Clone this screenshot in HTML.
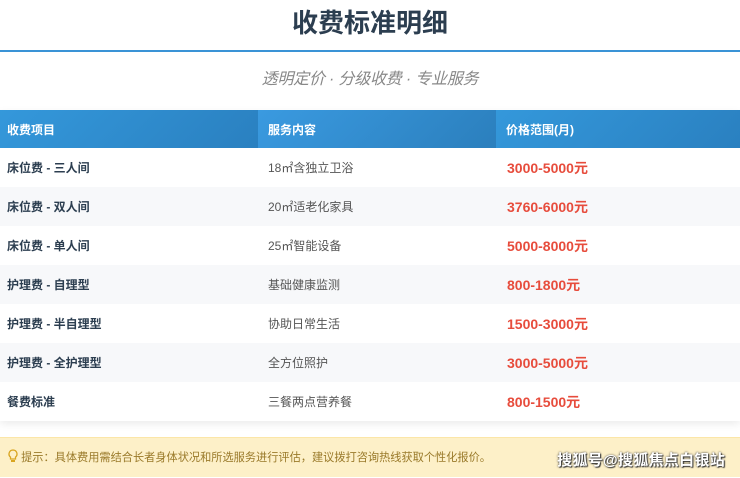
<!DOCTYPE html>
<html><head><meta charset="utf-8"><style>
body{margin:0;width:740px;height:477px;background:#fff;font-family:"Liberation Sans","Noto Sans CJK SC",sans-serif;overflow:hidden;position:relative}
h1{margin:0;position:absolute;top:5px;left:0;width:740px;text-align:center;font-size:26px;font-weight:bold;color:#2c3e50;line-height:36px}
.line{position:absolute;top:50px;left:0;width:740px;height:2px;background:#3a93d6}
.sub{position:absolute;top:68px;width:740px;text-align:center;font-size:16px;font-style:italic;color:#888;line-height:24px;letter-spacing:-0.2px}
table{position:absolute;top:110px;left:0;width:740px;border-collapse:collapse;box-shadow:0 3px 8px rgba(0,0,0,0.08)}
th{height:38px;text-align:left;padding:0 0 0 7px;font-size:12px;color:#fff;font-weight:bold;background:linear-gradient(135deg,#3498db,#2a80c0)}
th:nth-child(2){background:linear-gradient(135deg,#3a9ae0,#2b7fbd);padding-left:10px}
th:nth-child(3){padding-left:10px}
td{height:39px;padding:0 0 0 7px;font-size:12px;color:#333}
td:first-child{font-weight:bold;color:#2c3e50}
td:nth-child(2){color:#555;padding-left:10px}
td:nth-child(3){color:#e74c3c;font-weight:bold;font-size:14px;padding-left:11px}
tr:nth-child(odd) td{background:#f7f8fa}
.c1{width:251px}.c2{width:228px}
.note{position:absolute;top:437px;left:0;width:740px;height:40px;background:#fdf0c8;border-top:1px solid #fbe6a8;font-size:11.2px;color:#9a7a2a;line-height:40px;padding-left:8px;box-sizing:border-box}
.wm{position:absolute;right:15px;top:449px;font-size:15px;color:#fff;font-weight:bold;text-shadow:0 0 2px #333,1px 1px 1px #333;letter-spacing:0.3px}
</style></head><body>
<h1>收费标准明细</h1>
<div class="line"></div>
<div class="sub">透明定价 · 分级收费 · 专业服务</div>
<table>
<tr><th class="c1">收费项目</th><th class="c2">服务内容</th><th>价格范围(月)</th></tr>
<tr><td>床位费 - 三人间</td><td>18㎡含独立卫浴</td><td>3000-5000元</td></tr>
<tr><td>床位费 - 双人间</td><td>20㎡适老化家具</td><td>3760-6000元</td></tr>
<tr><td>床位费 - 单人间</td><td>25㎡智能设备</td><td>5000-8000元</td></tr>
<tr><td>护理费 - 自理型</td><td>基础健康监测</td><td>800-1800元</td></tr>
<tr><td>护理费 - 半自理型</td><td>协助日常生活</td><td>1500-3000元</td></tr>
<tr><td>护理费 - 全护理型</td><td>全方位照护</td><td>3000-5000元</td></tr>
<tr><td>餐费标准</td><td>三餐两点营养餐</td><td>800-1500元</td></tr>
</table>
<div class="note"><svg width="10" height="14" viewBox="0 0 10 14" style="vertical-align:-2px"><path d="M5 1a4 4 0 0 0-2.5 7.1V10h5V8.1A4 4 0 0 0 5 1z" fill="none" stroke="#d9a520" stroke-width="1.3"/><rect x="3" y="11" width="4" height="2" fill="#d9a520"/></svg> 提示：具体费用需结合长者身体状况和所选服务进行评估，建议拨打咨询热线获取个性化报价。</div>
<div class="wm">搜狐号@搜狐焦点白银站</div>
</body></html>
